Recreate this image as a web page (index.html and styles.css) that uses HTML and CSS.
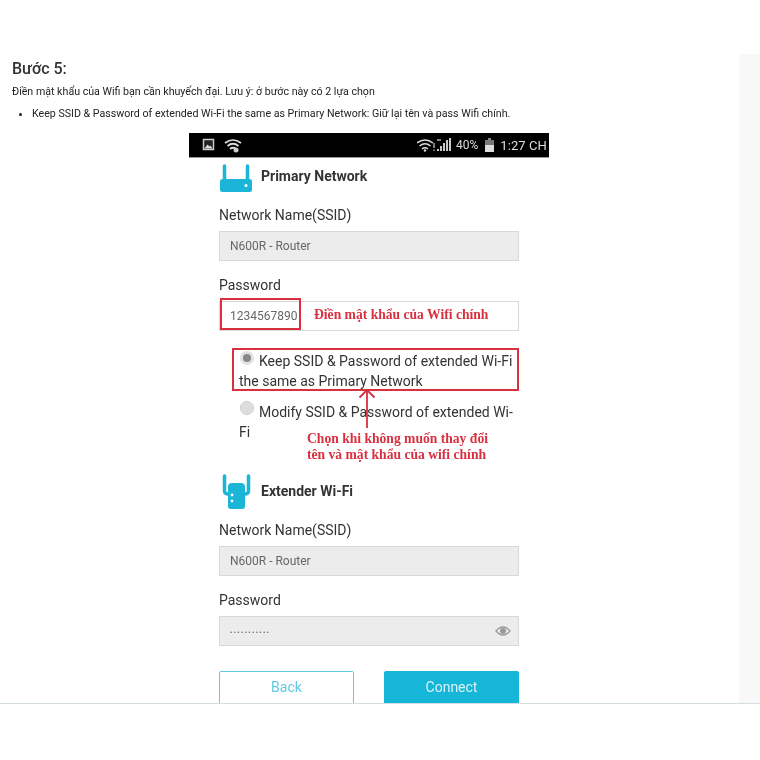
FILE: index.html
```html
<!DOCTYPE html>
<html>
<head>
  <meta charset="UTF-8">
  <title>Bước 5</title>
  <link rel="stylesheet" href="styles.css">
</head>

<body>
  <div class="sheet">
    <div class="article">
      <h3>Bước 5:</h3>
      <p>Điền mật khẩu của Wifi bạn cần khuyếch đại. Lưu ý: ở bước này có 2 lựa chọn</p>
      <ul>
        <li>Keep SSID &amp; Password of extended Wi-Fi the same as Primary Network: Giữ lại tên và pass Wifi chính.</li>
      </ul>

      <div class="phone">
        <div class="status-bar">
          <svg class="status-left" width="40" height="16" viewBox="0 0 40 16">
            <rect x="1.500" y="2.500" width="10" height="10" fill="#222" stroke="#ccc" stroke-width="1.500"/>
            <path d="M2.500 11.500l3-4 2 2 1-1 2 3z" fill="#ddd"/>
            <path d="M23 6q8-6 16 0M25.500 9q5.500-4.500 11 0M28 12q3-2.500 6 0" fill="none" stroke="#ddd" stroke-width="1.700"/>
            <circle cx="34" cy="13" r="2.500" fill="#ccc"/>
          </svg>
          <div class="status-right">
            <svg width="34" height="16" viewBox="0 0 34 16">
              <path d="M0 6q8-6 16 0M2.500 9q5.500-4.500 11 0M5 12q3-2.500 6 0" fill="none" stroke="#ddd" stroke-width="1.500"/>
              <circle cx="8" cy="13.500" r="1.200" fill="#ddd"/>
              <path d="M17 6v5M17 12.500v1.500" stroke="#ccc" stroke-width="1.200"/>
              <path d="M21 12v2M24 9v5M27 6v8M30 3v11M33 1v13" stroke="#ddd" stroke-width="1.800"/>
              <path d="M20 3h4" stroke="#aaa" stroke-width="1.500"/>
            </svg>
            <span class="battery-pct">40%</span>
            <svg class="battery" width="9" height="16" viewBox="0 0 9 16">
              <rect x="3" y="1" width="3" height="2" fill="#888"/>
              <rect x="0" y="3" width="9" height="5" fill="#777"/>
              <rect x="0" y="8" width="9" height="7" fill="#ddd"/>
            </svg>
            <span class="clock">1:27 CH</span>
          </div>
        </div>

        <div class="form">
          <div class="section-head primary-head">
            <svg class="router-icon" width="34" height="28" viewBox="0 0 34 28">
              <path d="M5.500 2v14M28.500 2v14" stroke="#1bb5d8" stroke-width="3.500" stroke-linecap="round"/>
              <rect x="1" y="15" width="32" height="13" rx="2.500" fill="#1bb5d8"/>
              <circle cx="27" cy="21.500" r="1.500" fill="#fff"/>
            </svg>
            <span>Primary Network</span>
          </div>

          <label class="first">Network Name(SSID)</label>
          <div class="field">N600R - Router</div>

          <label>Password</label>
          <div class="field field-white">1234567890</div>

          <div class="radio-row">
            <i class="radio checked"></i>Keep SSID &amp; Password of extended Wi-Fi the same as Primary Network
          </div>
          <div class="radio-row second">
            <span class="row-line"><i class="radio"></i>Modify SSID &amp; Password of extended Wi-</span>
            <span class="row-line">Fi</span>
          </div>

          <div class="section-head extender-head">
            <svg width="30" height="36" viewBox="0 0 30 36">
              <path d="M3.500 3v15q0 3 4 3M27.500 3v15q0 3-4 3" fill="none" stroke="#1bb5d8" stroke-width="3.500" stroke-linecap="round"/>
              <path d="M7 14q0-4 4-4h9q4 0 4 4v19q0 3-3 3H10q-3 0-3-3z" fill="#1bb5d8"/>
              <circle cx="11" cy="22" r="1.400" fill="#fff"/>
              <circle cx="11" cy="28" r="1.400" fill="#fff"/>
            </svg>
            <span>Extender Wi-Fi</span>
          </div>

          <label class="ext-label">Network Name(SSID)</label>
          <div class="field">N600R - Router</div>

          <label>Password</label>
          <div class="field field-pass">
            <span class="dots">•••••••••••</span>
            <svg width="16" height="12" viewBox="0 0 16 12">
              <path d="M1 6q7-8 14 0q-7 8-14 0z" fill="none" stroke="#999" stroke-width="1.300"/>
              <circle cx="8" cy="6" r="3" fill="#999"/>
            </svg>
          </div>

          <div class="buttons">
            <div class="btn btn-back">Back</div>
            <div class="btn btn-connect">Connect</div>
          </div>
        </div>

        <!-- chu thich do ve de len anh -->
        <div class="mark mark-pass"></div>
        <div class="note note-pass">Điền mật khẩu của Wifi chính</div>
        <div class="mark mark-keep"></div>
        <svg class="arrow" width="20" height="40" viewBox="0 0 20 40">
          <path d="M10 40V2M2.500 9.500L10 2l7.500 7.500" fill="none" stroke="#d9303f" stroke-width="1.800"/>
        </svg>
        <div class="note note-choose">Chọn khi không muốn thay đổi<br>tên và mật khẩu của wifi chính</div>
      </div>
    </div>
    <div class="side"></div>
  </div>
</body>

</html>
```

FILE: styles.css
```css
body {
  margin: 0;
  background-color: #fff;
  font-family: Roboto, "Liberation Sans", sans-serif;
  color: #222;
}

.sheet {
  display: flex;
  margin-top: 54px;
  height: 649px;
  overflow: hidden;
  border-bottom: 1px solid #d3dde2;
}

.article {
  flex: 1;
  padding: 5px 0 0 12px;
  filter: blur(0.5px);
}

.side {
  width: 21px;
  background-color: #f8f8f8;
}

h3 {
  margin: 0;
  font-size: 16px;
  line-height: 20px;
  font-weight: 500;
  color: #333;
}

p {
  margin: 6px 0 0;
  font-size: 10.65px;
  line-height: 14px;
}

ul {
  margin: 8px 0 0;
  padding-left: 20px;
  font-size: 10.65px;
  line-height: 14px;
}

.phone {
  position: relative;
  width: 360px;
  margin: 12px 0 0 177px;
}

.status-bar {
  display: flex;
  justify-content: space-between;
  align-items: center;
  height: 24px;
  background-color: #000;
  border-bottom: 1px solid #999;
  padding: 0 2px 0 13px;
}

.status-left {
  display: block;
}

.status-right {
  display: flex;
  align-items: center;
  color: #ddd;
  font-size: 12px;
}

.battery-pct {
  margin-left: 5px;
}

.battery {
  margin-left: 7px;
}

.clock {
  margin-left: 6px;
  font-size: 13px;
  letter-spacing: 0.1px;
}

.form {
  padding: 0 30px;
}

.section-head {
  display: flex;
  align-items: center;
  font-size: 14px;
  font-weight: 700;
  color: #333;
}

.primary-head {
  height: 36px;
  gap: 8px;
}

.router-icon {
  margin-top: 4px;
}

.extender-head {
  height: 36px;
  margin: 31px 0 0 2px;
  gap: 10px;
}

label {
  display: block;
  margin: 16px 0 7px;
  font-size: 14px;
  line-height: 17px;
  color: #333;
}

label.first {
  margin-top: 13px;
}

label.ext-label {
  margin-top: 13px;
}

.field {
  display: flex;
  align-items: center;
  height: 30px;
  box-sizing: border-box;
  padding: 0 10px;
  background-color: #ececec;
  border: 1px solid #d8d8d8;
  font-size: 12px;
  color: #666;
}

.field-white {
  background-color: #fff;
}

.field-pass {
  justify-content: space-between;
  padding-right: 7px;
}

.dots {
  margin-top: 3px;
  font-size: 7px;
  letter-spacing: 1.3px;
  color: #666;
}

.radio-row {
  margin: 20px 0 0 20px;
  width: 276px;
  font-size: 14px;
  line-height: 20px;
  color: #333;
}

.radio-row.second {
  margin-top: 10px;
}

.row-line {
  display: block;
  width: fit-content;
  white-space: nowrap;
}

.radio {
  display: inline-block;
  width: 14px;
  height: 14px;
  box-sizing: border-box;
  margin: 0 5px 0 1px;
  border-radius: 50%;
  background-color: #ddd;
  border: 1px solid #ccc;
  vertical-align: 1px;
}

.second .radio {
  vertical-align: 2px;
}

.radio.checked {
  background-color: #888;
  border: 3px solid #e2e2e2;
}

.buttons {
  display: flex;
  justify-content: space-between;
  margin-top: 25px;
}

.btn {
  width: 135px;
  height: 40px;
  box-sizing: border-box;
  border-radius: 2px;
  padding-top: 6px;
  text-align: center;
  font-size: 14px;
  line-height: 20px;
}

.btn-back {
  padding-top: 5px;
  border: 1.5px solid #5fcbe3;
  background-color: #fff;
  color: #5fcbe3;
}

.btn-connect {
  background-color: #16b6d8;
  color: #d9f3f9;
}

.mark {
  position: absolute;
  box-sizing: border-box;
  border: 2px solid #d9303f;
}

.mark-pass {
  left: 31px;
  top: 165px;
  width: 81px;
  height: 32px;
}

.mark-keep {
  left: 43px;
  top: 215px;
  width: 287px;
  height: 43px;
}

.note {
  position: absolute;
  font-family: "Liberation Serif", serif;
  font-weight: 700;
  color: #d9303f;
  font-size: 13.6px;
  line-height: 15.5px;
  white-space: nowrap;
}

.note-pass {
  left: 125px;
  top: 174px;
}

.note-choose {
  left: 118px;
  top: 298px;
}

.arrow {
  position: absolute;
  left: 168px;
  top: 255px;
}
```
